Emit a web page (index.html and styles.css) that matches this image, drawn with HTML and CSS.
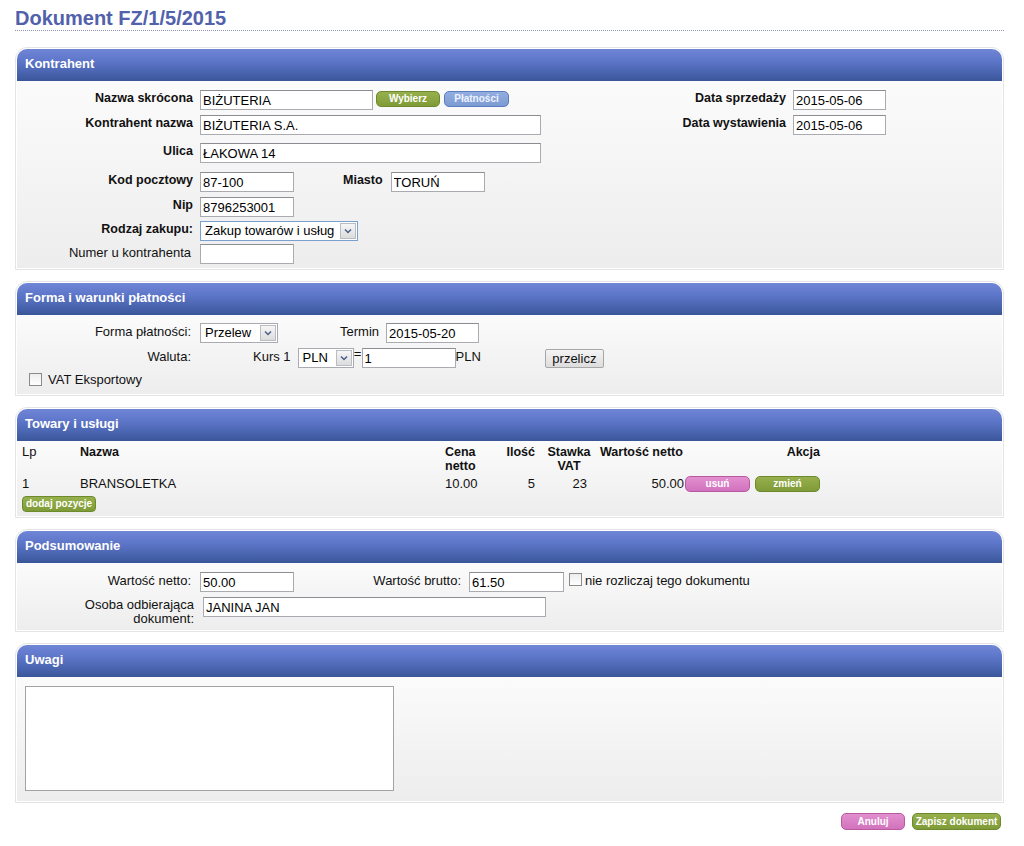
FILE: index.html
```html
<!DOCTYPE html>
<html lang="pl">
<head>
<meta charset="utf-8">
<title>Dokument FZ/1/5/2015</title>
<link rel="stylesheet" href="styles.css">
</head>
<body>
<div class="page">
  <h1 class="title">Dokument FZ/1/5/2015</h1>

  <section class="panel first">
    <div class="panel-head">Kontrahent</div>
    <div class="panel-body kbody">
      <div class="kleft">
        <div class="row r1"><span class="lbl b">Nazwa skrócona</span><input class="inp w173" value="BIŻUTERIA"><span class="btn green wyb">Wybierz</span><span class="btn blue plat">Płatności</span></div>
        <div class="row r2"><span class="lbl b">Kontrahent nazwa</span><input class="inp w341" value="BIŻUTERIA S.A."></div>
        <div class="row r3"><span class="lbl b">Ulica</span><input class="inp w341" value="ŁAKOWA 14"></div>
        <div class="row r4"><span class="lbl b">Kod pocztowy</span><input class="inp w94" value="87-100"><span class="txt b miasto">Miasto</span><input class="inp w94" value="TORUŃ"></div>
        <div class="row r5"><span class="lbl b">Nip</span><input class="inp w94" value="8796253001"></div>
        <div class="row r6"><span class="lbl b">Rodzaj zakupu:</span><span class="sel focus w158"><span class="sel-val">Zakup towarów i usług</span><span class="sel-arr"><svg width="8" height="6" viewBox="0 0 8 6"><path d="M1 1.5 L4 4.5 L7 1.5" fill="none" stroke="#4a5f86" stroke-width="1.5"/></svg></span></span></div>
        <div class="row r7"><span class="lbl">Numer u kontrahenta</span><input class="inp w94" value=""></div>
      </div>
      <div class="kright">
        <span class="lbl-r b">Data sprzedaży</span><input class="inp w93" value="2015-05-06">
        <span class="lbl-r b">Data wystawienia</span><input class="inp w93" value="2015-05-06">
      </div>
    </div>
  </section>

  <section class="panel">
    <div class="panel-head">Forma i warunki płatności</div>
    <div class="panel-body fbody">
      <div class="row h25"><span class="lbl">Forma płatności:</span><span class="sel w78"><span class="sel-val">Przelew</span><span class="sel-arr"><svg width="8" height="6" viewBox="0 0 8 6"><path d="M1 1.5 L4 4.5 L7 1.5" fill="none" stroke="#4a5f86" stroke-width="1.5"/></svg></span></span><span class="txt termin">Termin</span><input class="inp w93" value="2015-05-20"></div>
      <div class="row h25"><span class="lbl">Waluta:</span><span class="txt kurs">Kurs 1</span><span class="sel w56"><span class="sel-val">PLN</span><span class="sel-arr"><svg width="8" height="6" viewBox="0 0 8 6"><path d="M1 1.5 L4 4.5 L7 1.5" fill="none" stroke="#4a5f86" stroke-width="1.5"/></svg></span></span><span class="txt eq">=</span><input class="inp w94" value="1"><span class="txt">PLN</span><button class="btn-grey" type="button">przelicz</button></div>
      <div class="row chkrow"><span class="chk"></span><span class="txt chk-txt">VAT Eksportowy</span></div>
    </div>
  </section>

  <section class="panel">
    <div class="panel-head">Towary i usługi</div>
    <div class="panel-body tbody">
      <div class="items">
        <div class="th">Lp</div>
        <div class="th b">Nazwa</div>
        <div class="th b">Cena<br>netto</div>
        <div class="th b r ilosc">Ilość</div>
        <div class="th b c">Stawka<br>VAT</div>
        <div class="th b wn">Wartość netto</div>
        <div class="th b r">Akcja</div>
        <div class="td">1</div>
        <div class="td">BRANSOLETKA</div>
        <div class="td">10.00</div>
        <div class="td r ilosc">5</div>
        <div class="td r vat">23</div>
        <div class="td r">50.00</div>
        <div class="td act"><span class="btn pink wact">usuń</span><span class="btn green wact">zmień</span></div>
      </div>
      <span class="btn green add">dodaj pozycje</span>
    </div>
  </section>

  <section class="panel">
    <div class="panel-head">Podsumowanie</div>
    <div class="panel-body sbody">
      <div class="row h25"><span class="lbl">Wartość netto:</span><input class="inp w94" value="50.00"><span class="lbl brutto">Wartość brutto:</span><input class="inp w95" value="61.50"><span class="chk nr"></span><span class="txt">nie rozliczaj tego dokumentu</span></div>
      <div class="row"><span class="lbl two">Osoba odbierająca<br>dokument:</span><input class="inp w343" value="JANINA JAN"></div>
    </div>
  </section>

  <section class="panel">
    <div class="panel-head">Uwagi</div>
    <div class="panel-body ubody">
      <textarea class="uwagi"></textarea>
    </div>
  </section>

  <div class="actions">
    <span class="btn pink anuluj">Anuluj</span>
    <span class="btn green zapisz">Zapisz dokument</span>
  </div>
</div>
</body>
</html>
```

FILE: styles.css
```css
* { box-sizing: border-box; }

body {
  margin: 0;
  background: #fff;
  font-family: "Liberation Sans", Arial, sans-serif;
  font-size: 13px;
  color: #111;
}

.page {
  padding: 0 20px 0 15px;
}

.title {
  margin: 0;
  padding-top: 6px;
  font-size: 20px;
  line-height: 24px;
  font-weight: bold;
  color: #5161ab;
  border-bottom: 1px dotted #8d94b5;
}

/* panels */
.panel {
  margin-top: 11px;
  border: 1px solid #e4e4e4;
  border-radius: 12px 12px 0 0;
  padding: 1px;
  background: #fff;
}
.panel.first { margin-top: 16px; }

.panel-head {
  height: 32px;
  line-height: 30px;
  padding-left: 8px;
  color: #fff;
  font-weight: bold;
  font-size: 13px;
  border-radius: 10px 10px 0 0;
  background: linear-gradient(to bottom, #7086d7 0%, #5f77ca 35%, #4864ae 75%, #3a5598 100%);
}

.panel-body {
  background: linear-gradient(to bottom, #fbfbfb, #ededed);
}

/* generic rows */
.row {
  display: flex;
  align-items: flex-start;
}
.h25 { height: 25px; }

.lbl {
  flex: 0 0 176px;
  width: 176px;
  margin-right: 7px;
  padding-right: 2px;
  text-align: right;
  line-height: 17px;
  font-size: 13px;
}
.lbl.b {
  padding-right: 0;
}
.lbl.b, .lbl-r.b, .txt.b {
  font-weight: bold;
  font-size: 12.5px;
}
.txt {
  line-height: 17px;
  white-space: nowrap;
}

.inp {
  height: 20px;
  border: 1px solid #a9abb0;
  border-top-color: #8a8d92;
  background: #fff;
  padding: 0 2px;
  font-family: inherit;
  font-size: 13px;
  color: #000;
  margin: 0;
  outline: none;
}
.w93 { width: 93px; }
.w94 { width: 94px; }
.w95 { width: 95px; }
.w173 { width: 173px; }
.w341 { width: 341px; }
.w343 { width: 343px; }

/* fake selects */
.sel {
  display: inline-flex;
  align-items: stretch;
  height: 20px;
  border: 1px solid #a9abb0;
  background: #fff;
  font-size: 13px;
}
.sel.focus { border-color: #7aa0d0; }
.sel-val {
  flex: 1;
  padding-left: 4px;
  line-height: 18px;
  white-space: nowrap;
  overflow: hidden;
  color: #000;
}
.sel-arr {
  width: 16px;
  margin: 1px;
  border: 1px solid #b9bcc2;
  background: linear-gradient(to bottom, #f6f6f6, #dcdcdc);
  display: flex;
  align-items: center;
  justify-content: center;
}
.w158 { width: 158px; }
.w78 { width: 78px; }
.w56 { width: 56px; }

/* buttons */
.btn {
  display: inline-block;
  height: 16px;
  line-height: 14px;
  border: 1px solid;
  border-radius: 5px;
  font-size: 10px;
  font-weight: bold;
  color: #fff;
  text-align: center;
  white-space: nowrap;
}
.btn.green {
  background: linear-gradient(to bottom, #97b04d, #7f9b37);
  border-color: #6c8a2b;
}
.btn.pink {
  background: linear-gradient(to bottom, #e28fcf, #d272bd);
  border-color: #b8599f;
}
.btn.blue {
  background: linear-gradient(to bottom, #93aee0, #7b9bd3);
  border-color: #5a7bbd;
  color: #eef2ff;
}
.wyb { width: 64px; margin: 1px 0 0 3px; }
.plat { width: 65px; margin: 1px 0 0 4px; }

.btn-grey {
  height: 19px;
  width: 59px;
  margin: 1px 0 0 64px;
  padding: 0;
  border: 1px solid #a7a7a7;
  border-radius: 2px;
  background: linear-gradient(to bottom, #f4f4f4, #dddddd);
  font-family: inherit;
  font-size: 13px;
  color: #111;
}

/* checkbox */
.chk {
  display: inline-block;
  width: 13px;
  height: 13px;
  border: 1px solid #8a8a8a;
  background: linear-gradient(to bottom, #ededed, #fff);
  flex: 0 0 13px;
}

/* Kontrahent */
.kbody {
  display: flex;
  padding: 9px 0 0;
}
.r1 { height: 25px; }
.r2 { height: 28px; }
.r3 { height: 29px; }
.r4 { height: 25px; }
.r5 { height: 24px; }
.r6 { height: 23px; }
.r7 { height: 24px; }
.miasto { margin: 0 8px 0 49px; }

.kright {
  margin-left: auto;
  margin-right: 116px;
  display: grid;
  grid-template-columns: auto 93px;
  grid-auto-rows: 25px;
  column-gap: 7px;
  align-items: start;
  align-content: start;
}
.lbl-r {
  text-align: right;
  line-height: 17px;
}

/* Forma platnosci */
.fbody { padding: 8px 0 0; }
.termin { margin: 0 7px 0 62px; }
.kurs { margin: 0 7px 0 53px; }
.eq { width: 8px; text-align: center; line-height: 12px; }
.chkrow {
  height: 21px;
  padding-left: 12px;
  gap: 6px;
}
.chk-txt { line-height: 14px; }

/* Towary */
.tbody { padding: 4px 0 4px 5px; }
.items {
  display: grid;
  grid-template-columns: 58px 365px 50px 45px 58px 86px 136px;
  grid-template-rows: 28px 22px;
}
.th { line-height: 14px; }
.th.b { font-weight: bold; font-size: 12.5px; }
.td { align-self: center; line-height: 16px; }
.r { text-align: right; }
.c { text-align: center; }
.ilosc { padding-right: 5px; }
.vat { padding-right: 11px; }
.wn { padding-left: 2px; }
.act { display: flex; gap: 5px; padding-left: 1px; }
.wact { width: 65px; }
.add {
  margin-top: 1px;
  padding: 0 3px;
  border-radius: 4px;
}

/* Podsumowanie */
.sbody { padding: 9px 0 3px; }
.lbl.brutto {
  flex: 0 0 167px;
  width: 167px;
  margin-right: 8px;
  padding-right: 0;
}
.nr { margin: 1px 3px 0 5px; }
.lbl.two {
  flex: 0 0 179px;
  width: 179px;
  line-height: 14px;
  padding-top: 1px;
  padding-right: 2px;
  height: 30px;
}

/* Uwagi */
.ubody { padding: 9px 0 10px 8px; }
.uwagi {
  display: block;
  width: 369px;
  height: 105px;
  margin: 0;
  border: 1px solid #a3a3a3;
  background: #fff;
  resize: none;
  font-family: inherit;
  font-size: 13px;
  outline: none;
}

/* actions */
.actions {
  display: flex;
  justify-content: flex-end;
  gap: 7px;
  margin-top: 10px;
  padding-right: 3px;
}
.actions .btn { height: 17px; line-height: 15px; }
.anuluj { width: 64px; }
.zapisz { width: 89px; }
```
